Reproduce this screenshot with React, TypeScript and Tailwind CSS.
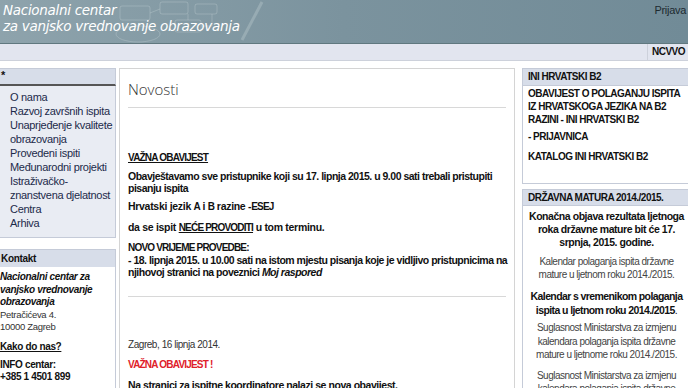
const caps = "font-['Liberation_Sans',sans-serif] text-[10px] tracking-[-0.8px]"
const capsR = "font-['Liberation_Sans',sans-serif] text-[10px] tracking-[-0.5px]"

export default function App() {
  return (
    <div className="w-[688px] h-[388px] overflow-hidden bg-white text-[#111] font-['Liberation_Sans',Arial,sans-serif] whitespace-nowrap">
      {/* zaglavlje */}
      <div className="relative h-[44px] bg-gradient-to-r from-[#8ea3ac] via-[#7b939e] to-[#718b97] border-b border-[#60787f]">
        <svg className="absolute inset-0" width="300" height="44" viewBox="0 0 300 44">
          <g fill="none" stroke="#c3d0d5" strokeOpacity="0.35" strokeWidth="1">
            <rect x="120" y="6" width="30" height="14" rx="2" />
            <rect x="160" y="2" width="28" height="12" rx="2" />
            <rect x="175" y="20" width="26" height="12" rx="2" />
            <rect x="195" y="4" width="22" height="10" rx="2" />
            <path d="M150 13 L160 9 M188 14 L188 20 M201 26 L212 26 L212 14" />
            <ellipse cx="138" cy="34" rx="22" ry="8" />
            <path d="M242 40 L262 2" strokeWidth="3" />
          </g>
        </svg>
        <div className="relative flex justify-between">
          <div className="pl-[3px] pt-[2px] text-white italic text-[13.5px] leading-[16px] font-['DejaVu_Sans',sans-serif] tracking-[-0.3px]">
            <div>Nacionalni centar</div>
            <div>za vanjsko vrednovanje obrazovanja</div>
          </div>
          <div className="pt-[3px] pr-[2px] text-[11px] leading-[14px] tracking-[-0.3px] text-[#1d2a30]">Prijava</div>
        </div>
      </div>
      {/* traka */}
      <div className="h-[17px] bg-[#e2e5ef] border-b border-[#cdd1db] flex justify-end">
        <div className="border-l border-[#cdd1db] pl-[4px] pr-[3px] font-bold text-[10px] tracking-[-0.5px] leading-[16px]">NCVVO</div>
      </div>

      <div className="flex mt-[7px]">
        {/* lijevi stupac */}
        <div className="w-[116px] shrink-0">
          <div className="bg-[#d7dde9] border-t border-r border-[#c5cbd8] border-b-2 border-b-[#555] h-[18px] pl-[1px] text-[11px] leading-[12px] font-bold">*</div>
          <div className="bg-[#e9ecf3] border-r border-b border-[#c5cbd8] pl-[10px] pt-[4px] pb-[7px] text-[11px] tracking-[-0.3px] leading-[14px] text-[#1c2a4a]">
            <div>O nama</div>
            <div>Razvoj završnih ispita</div>
            <div>Unaprjeđenje kvalitete<br />obrazovanja</div>
            <div>Provedeni ispiti</div>
            <div>Međunarodni projekti</div>
            <div>Istraživačko-<br />znanstvena djelatnost<br />Centra</div>
            <div>Arhiva</div>
          </div>
          <div className="mt-[11px] bg-[#d7dde9] border-t border-r border-[#c5cbd8] h-[18px] leading-[17px] font-bold text-[10px] tracking-[-0.3px] pl-[1px]">Kontakt</div>
          <div className="border-r border-[#c5cbd8] pt-[4px] h-[130px]">
            <div className="font-bold italic text-[10px] tracking-[-0.35px] leading-[12.5px]">Nacionalni centar za<br />vanjsko vrednovanje<br />obrazovanja</div>
            <div className="text-[#333] text-[9.5px] tracking-[-0.3px] leading-[12px]">Petračićeva 4.<br />10000 Zagreb</div>
            <div className="mt-[8px] font-bold underline text-[10px] tracking-[-0.35px] leading-[12px]">Kako do nas?</div>
            <div className="mt-[6px] font-bold text-[10px] tracking-[-0.35px] leading-[12px]">INFO centar:<br />+385 1 4501 899</div>
          </div>
        </div>

        {/* srednji stupac */}
        <div className="ml-[3px] w-[396px] shrink-0 border border-[#d4d4d4] px-[8px] h-[330px]">
          <h1 className="pt-[10px] text-[15px] leading-[20px] text-[#333] font-['Open_Sans',sans-serif] font-light">Novosti</h1>
          <hr className="mt-[8px] border-[#d8d8d8]" />
          <div className="pt-[44px] font-bold text-[10.5px] tracking-[-0.5px] leading-[12px]">
            <p className={`underline ${caps}`}>VAŽNA OBAVIJEST</p>
            <p className="mt-[6px]">Obavještavamo sve pristupnike koji su 17. lipnja 2015. u 9.00 sati trebali pristupiti<br />pisanju ispita</p>
            <p className="mt-[6px] tracking-[-0.3px]">Hrvatski jezik <span className={caps}>A</span> i <span className={caps}>B</span> razine -<span className={caps}>ESEJ</span></p>
            <p className="mt-[8px] tracking-[-0.3px]">da se ispit <span className={`underline ${caps}`}>NEĆE PROVODITI</span> u tom terminu.</p>
            <p className="mt-[7px]"><span className={caps}>NOVO VRIJEME PROVEDBE:</span><br />- 18. lipnja 2015. u 10.00 sati na istom mjestu pisanja koje je vidljivo pristupnicima na<br />njihovoj stranici na poveznici <i>Moj raspored</i></p>
          </div>
          <hr className="mt-[18px] border-[#d8d8d8]" />
          <div className="pt-[42px] leading-[12px]">
            <p className="text-[#333] text-[10px] tracking-[-0.45px]">Zagreb, 16 lipnja 2014.</p>
            <p className={`mt-[8px] font-bold text-[#e0202a] ${caps}`}>VAŽNA OBAVIJEST !</p>
            <p className="mt-[8px] font-bold text-[10.5px] tracking-[-0.45px]">Na stranici za ispitne koordinatore nalazi se nova obavijest.</p>
          </div>
        </div>

        {/* desni stupac */}
        <div className="ml-[7px] w-[168px] shrink-0">
          <div className={`bg-[#d7dde9] border border-[#c5cbd8] h-[18px] leading-[16px] font-bold pl-[5px] ${capsR}`}>INI HRVATSKI B2</div>
          <div className={`border-l border-b border-[#c5cbd8] pl-[5px] pt-[1px] h-[98px] font-bold leading-[13px] ${capsR}`}>
            <p>OBAVIJEST O POLAGANJU ISPITA<br />IZ HRVATSKOGA JEZIKA NA B2<br />RAZINI - INI HRVATSKI B2</p>
            <p className="mt-[4px]">- PRIJAVNICA</p>
            <p className="mt-[7px]">KATALOG INI HRVATSKI B2</p>
          </div>
          <div className={`mt-[5px] bg-[#d7dde9] border border-[#c5cbd8] h-[17px] leading-[15px] font-bold pl-[5px] ${capsR}`}>DRŽAVNA MATURA 2014./2015.</div>
          <div className="border-l border-[#c5cbd8] pt-[4px] text-center h-[200px]">
            <p className="font-bold text-[10.5px] tracking-[-0.45px] leading-[13px]">Konačna objava rezultata ljetnoga<br />roka državne mature bit će 17.<br />srpnja, 2015. godine.</p>
            <p className="mt-[6px] text-[#444] text-[10px] tracking-[-0.5px] leading-[13px]">Kalendar polaganja ispita državne<br />mature u ljetnom roku 2014./2015.</p>
            <p className="mt-[8px] font-bold text-[10.5px] tracking-[-0.6px] leading-[14px]">Kalendar s vremenikom polaganja<br />ispita u ljetnom roku 2014./2015<span className="font-normal">.</span></p>
            <p className="mt-[4px] text-[#444] text-[10px] tracking-[-0.5px] leading-[13.5px]">Suglasnost Ministarstva za izmjenu<br />kalendara polaganja ispita državne<br />mature u ljetnome roku 2014./2015.</p>
            <p className="mt-[7px] text-[#444] text-[10px] tracking-[-0.5px] leading-[13.5px]">Suglasnost Ministarstva za izmjenu<br />kalendara polaganja ispita državne<br />mature u jesenskom roku 2014./2015.</p>
          </div>
        </div>
      </div>
    </div>
  )
}
